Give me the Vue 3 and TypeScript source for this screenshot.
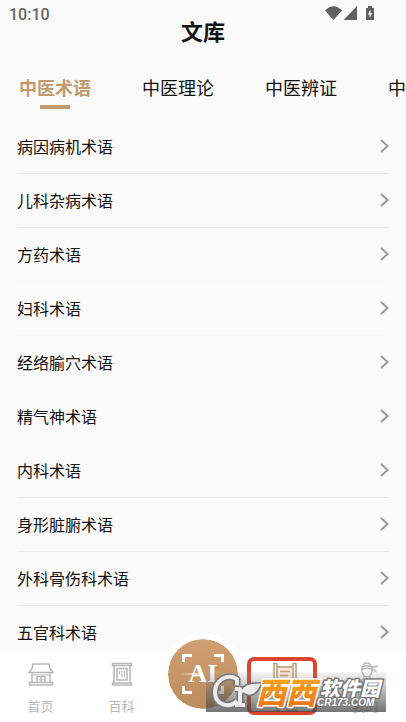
<script setup lang="ts">
import { ref } from 'vue'

const tabs: string[] = ['中医术语', '中医理论', '中医辨证', '中医诊断']
const activeTab = ref<string>(tabs[0])

const topics: string[] = [
  '病因病机术语',
  '儿科杂病术语',
  '方药术语',
  '妇科术语',
  '经络腧穴术语',
  '精气神术语',
  '内科术语',
  '身形脏腑术语',
  '外科骨伤科术语',
  '五官科术语',
]
</script>

<template>
  <div class="screen">
    <div class="status">
      <span class="clock">10:10</span>
      <svg class="signals" width="50" height="16" viewBox="0 0 50 16" aria-hidden="true">
        <path d="M0 4.600 Q8.500 -4 17 4.600 L8.500 14 Z" />
        <path d="M32 0 V14 H18.500 Z" />
        <path d="M41 2 h2 v-2 h4 v2 h2 v12 h-8 Z" />
        <path class="bolt" d="M45.500 3.500 L42.800 8.500 H44.500 V12 L47.300 7 H45.500 Z" />
      </svg>
    </div>

    <header class="title"><h1>文库</h1></header>

    <nav class="tabs">
      <button
        v-for="tab in tabs"
        :key="tab"
        type="button"
        class="tab"
        :class="{ active: tab === activeTab }"
        @click="activeTab = tab"
      >{{ tab }}</button>
    </nav>

    <main class="list">
      <a v-for="topic in topics" :key="topic" href="#" class="row">
        <span>{{ topic }}</span>
        <svg width="9" height="14" viewBox="0 0 9 14" aria-hidden="true">
          <path d="M1 1 L7.500 7 L1 13" />
        </svg>
      </a>
    </main>

    <footer class="bar">
      <a href="#" class="item">
        <svg class="icon" width="28" height="26" viewBox="0 0 28 26" aria-hidden="true">
          <path d="M6 2 H22 L23 6.500 L26 10.500 H2 L5 6.500 Z M5 10.500 V21 M23 10.500 V21 M2.500 20.500 H25.500 V23 H2.500 Z M10 20 V14.500 H18 V20 M14 15 V20" />
          <path class="thin" d="M12 17 V18.500 M16 17 V18.500 M6 13 H22" />
        </svg>
        <span>首页</span>
      </a>
      <a href="#" class="item">
        <svg class="icon" width="28" height="26" viewBox="0 0 28 26" aria-hidden="true">
          <path d="M4.500 1.500 H23.500 V3.500 H4.500 Z M4.500 21 H23.500 V23 H4.500 Z M6 4 V21 M22 4 V21 M9 6.500 H19 V18 H9 Z" />
          <path class="thin" d="M11.500 9 V12.500 M14 9 V15.500 M16.500 9 V15.500" />
        </svg>
        <span>百科</span>
      </a>
      <div class="item">
        <button type="button" class="ai">
          <svg class="corners" width="42" height="40" viewBox="0 0 42 40" aria-hidden="true">
            <path d="M1.500 8 V1.500 H10 M32 1.500 H40.500 V8 M40.500 32 V38.500 H32 M10 38.500 H1.500 V32" />
            <path class="flare" d="M-2 20 L14 19 L22 20 L14 21 Z" />
          </svg>
          <span>AI</span>
        </button>
      </div>
      <a href="#" class="item current">
        <svg class="icon" width="28" height="26" viewBox="0 0 28 26" aria-hidden="true">
          <path class="paper" d="M6 4 H22 V22 H6 Z" />
          <path d="M3 1.500 H6 V24 H3 Z M22 1.500 H25 V24 H22 Z M6 5 H22 M9 9.500 H19 M9 13.500 H17 M6 20 H22" />
        </svg>
        <span>文库</span>
      </a>
      <a href="#" class="item">
        <svg class="icon" width="28" height="26" viewBox="0 0 28 26" aria-hidden="true">
          <path d="M11 3 Q12 0.500 15 1 Q18 1 19 4 M10 7 V9 Q11 15 15 15 Q19 15 20 9 V7" />
          <path d="M10 5 Q15 2.500 20 5 V7.500 Q15 5 10 7.500 Z M20 5.500 L26 4 M20 6.500 L24.500 10" />
          <path d="M12.500 15 L11 17.500 L5 20 L3 25 M17.500 15 L19 17.500 L25 20 L27 25 M11 17.500 L15 22 L19 17.500" />
        </svg>
        <span>我的</span>
      </a>

      <div class="watermark">
        <svg width="180" height="40" viewBox="0 0 180 40" aria-hidden="true">
          <defs>
            <linearGradient id="orange" x1="0" y1="0" x2="0" y2="1">
              <stop offset="0" stop-color="#f9b51c" />
              <stop offset="1" stop-color="#e96a12" />
            </linearGradient>
          </defs>
          <g class="mark">
            <g class="edge">
              <path d="M31 13 V7 C20 1 9 9 9 20 C9 33 23 37 31 29" />
              <path d="M29 17 H34 V33 M29 33 H39" />
              <path class="leaf" d="M34 23 C38 11 46 13 54 12 C51 21 44 25 38 20" />
            </g>
            <g class="face">
              <path d="M31 13 V7 C20 1 9 9 9 20 C9 33 23 37 31 29" />
              <path d="M29 17 H34 V33 M29 33 H39" />
              <path class="leaf" d="M34 23 C38 11 46 13 54 12 C51 21 44 25 38 20" />
            </g>
          </g>
          <text class="brand" x="50" y="32">西西</text>
          <text class="soft" x="114" y="24">软件园</text>
          <text class="site" x="111" y="34">CR173.COM</text>
        </svg>
      </div>
    </footer>
  </div>
</template>

<style>
body {
  background: #fafafa;
}
</style>

<style scoped>
.screen {
  display: flex;
  flex-direction: column;
  height: 100vh;
  overflow: hidden;
  background: #fafafa;
  color: #111;
  font-family: 'Noto Sans CJK SC', sans-serif;
}
a {
  color: inherit;
  text-decoration: none;
}
button {
  padding: 0;
  border: 0;
  background: none;
  color: inherit;
  font: inherit;
}
.status {
  display: flex;
  flex: none;
  justify-content: space-between;
  height: 14px;
  padding: 6px 31px 0 9px;
}
.clock {
  color: #666;
  font: 500 16px/18px Roboto, sans-serif;
}
.signals {
  fill: #606060;
}
.signals .bolt {
  fill: #fafafa;
}
.title {
  flex: none;
  height: 44px;
  text-align: center;
}
.title h1 {
  margin: 0;
  font-size: 22px;
  font-weight: 700;
  line-height: 20px;
}
.tabs {
  display: flex;
  flex: none;
  gap: 51px;
  height: 56px;
  padding-left: 19px;
  overflow: hidden;
}
.tab {
  display: flex;
  flex: none;
  flex-direction: column;
  align-items: center;
  height: 45px;
  padding-top: 8px;
  font-size: 18px;
  line-height: 30px;
  white-space: nowrap;
}
.tab.active {
  color: #c19a6e;
  font-weight: 700;
}
.tab.active::after {
  content: '';
  width: 30px;
  height: 4px;
  margin-top: 3px;
  background: #c19a6e;
}
.list {
  flex: 1;
  min-height: 0;
  padding: 0 17px;
  overflow: hidden;
}
.row {
  display: flex;
  align-items: center;
  justify-content: space-between;
  box-sizing: border-box;
  height: 54px;
  padding-bottom: 2px;
  border-bottom: 1px solid #ebebeb;
  font-size: 16px;
  line-height: 24px;
}
/* The middle hairlines fade almost into the page */
.row:nth-child(n + 3):nth-child(-n + 6) {
  border-color: #f7f7f7;
}
.row svg {
  fill: none;
  stroke: #999;
  stroke-width: 2;
}
.bar {
  position: relative;
  display: flex;
  flex: none;
  height: 69px;
  background: #fff;
}
.item {
  display: flex;
  flex: 1;
  flex-direction: column;
  align-items: center;
  gap: 6px;
  padding-top: 9px;
  color: #b8b8b8;
  font-size: 13px;
  line-height: 24px;
}
.icon {
  fill: none;
  stroke: currentColor;
  stroke-width: 1.5;
}
.icon .thin {
  stroke-width: 1;
}
.current {
  position: relative;
  color: #c19a6e;
}
.current .paper {
  fill: #faeadb;
  stroke: none;
}
.current::after {
  content: '';
  position: absolute;
  top: 4px;
  left: 50%;
  z-index: 1;
  box-sizing: border-box;
  width: 70px;
  height: 58px;
  margin-left: -38px;
  border: 4px solid #dc4330;
  border-radius: 7px;
}
.ai {
  display: grid;
  place-items: center;
  flex: none;
  box-sizing: content-box;
  width: 70px;
  height: 70px;
  margin-top: -29px;
  border: 6px solid #fff;
  border-radius: 50%;
  background: linear-gradient(#d0a073, #bd8c5b) padding-box;
  color: #fff;
  font: 700 26px/30px 'Liberation Serif', serif;
}
.ai > * {
  grid-area: 1 / 1;
}
.corners {
  overflow: visible;
  fill: none;
  stroke: #fff;
  stroke-width: 3;
}
.corners .flare {
  fill: #f3dcc2;
  stroke: none;
}
.watermark {
  position: absolute;
  top: 19px;
  right: 20px;
  z-index: 2;
  height: 40px;
  background: linear-gradient(rgba(190, 190, 190, 0.15), rgba(70, 70, 70, 0.75));
  pointer-events: none;
}
.watermark svg {
  display: block;
  overflow: visible;
}
.mark {
  fill: none;
  stroke-linejoin: round;
}
.edge {
  stroke: #777;
  stroke-width: 7;
}
.face {
  stroke: #ececec;
  stroke-width: 4;
}
.edge .leaf {
  fill: #777;
  stroke-width: 4;
}
.face .leaf {
  fill: #ececec;
  stroke-width: 1;
}
.watermark text {
  font-family: 'Noto Sans CJK SC', sans-serif;
  font-style: italic;
  font-weight: 900;
  paint-order: stroke;
  stroke-linejoin: round;
}
.brand {
  fill: url(#orange);
  stroke: #fff;
  stroke-width: 3;
  font-size: 30px;
}
.soft {
  fill: #fff;
  stroke: #777;
  stroke-width: 3;
  font-size: 20px;
}
.watermark .site {
  fill: #fff;
  stroke: #777;
  stroke-width: 2;
  font-family: 'Liberation Sans', sans-serif;
  font-size: 10px;
}
</style>
